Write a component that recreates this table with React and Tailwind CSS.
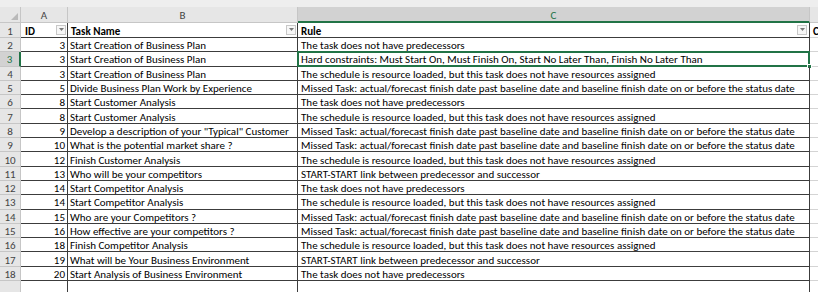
import React from "react";

const S = "The task does not have predecessors";
const H = "Hard constraints: Must Start On, Must Finish On, Start No Later Than, Finish No Later Than";
const R = "The schedule is resource loaded, but this task does not have resources assigned";
const M = "Missed Task: actual/forecast finish date past baseline date and baseline finish date on or before the status date";
const L = "START-START link between predecessor and successor";

const rows = [
  [3, "Start Creation of Business Plan", S],
  [3, "Start Creation of Business Plan", H],
  [3, "Start Creation of Business Plan", R],
  [5, "Divide Business Plan Work by Experience", M],
  [8, "Start Customer Analysis", S],
  [8, "Start Customer Analysis", R],
  [9, 'Develop a description of your "Typical" Customer', M],
  [10, "What is the potential market share ?", M],
  [12, "Finish Customer Analysis", R],
  [13, "Who will be your competitors", L],
  [14, "Start Competitor Analysis", S],
  [14, "Start Competitor Analysis", R],
  [15, "Who are your Competitors ?", M],
  [16, "How effective are your competitors ?", M],
  [18, "Finish Competitor Analysis", R],
  [19, "What will be Your Business Environment", L],
  [20, "Start Analysis of Business Environment", S],
];

function Drop() {
  return (
    <div className="w-[10px] h-[10px] border border-[#c8c8c8] bg-[#f7f7f7] flex items-center justify-center shrink-0 mt-[-1px]">
      <svg width="5" height="3" viewBox="0 0 5 3">
        <path d="M0 0 L5 0 L2.5 3 Z" fill="#7a7a7a" />
      </svg>
    </div>
  );
}

export default function App() {
  return (
    <div
      className="w-[825px] h-[292px] overflow-hidden bg-white text-[11px] text-black leading-none"
      style={{ fontFamily: "Carlito, Calibri, Lato, 'Liberation Sans', sans-serif" }}
    >
      <div className="w-[818px] h-[7px] bg-[#eeeeee]" />
      {/* column headers */}
      <div className="flex h-[16px] w-[818px]">
        <div className="w-[21px] shrink-0 bg-[#e6e6e6] border-r border-b border-[#c6c6c6] relative">
          <svg className="absolute right-[2px] bottom-[2px]" width="7" height="7" viewBox="0 0 7 7">
            <path d="M7 0 L7 7 L0 7 Z" fill="#b9b9b9" />
          </svg>
        </div>
        <div className="w-[47px] shrink-0 bg-[#e6e6e6] border-r border-b border-[#c6c6c6] flex items-center justify-center pt-[2px] text-[#444]">A</div>
        <div className="w-[230px] shrink-0 bg-[#e6e6e6] border-r border-b border-[#c6c6c6] flex items-center justify-center pt-[2px] text-[#444]">B</div>
        <div className="w-[512px] shrink-0 bg-[#d2d2d2] border-r border-[#c6c6c6] border-b-2 border-b-[#217346] flex items-center justify-center pt-[2px] text-[#217346]">C</div>
        <div className="flex-1 bg-[#e6e6e6] border-b border-[#c6c6c6]" />
      </div>
      {/* header row 1 */}
      <div className="flex h-[15px] w-[818px]">
        <div className="w-[21px] shrink-0 bg-[#e6e6e6] border-r border-b border-[#c6c6c6] flex items-center justify-center pt-[2px] text-[#444]">1</div>
        <div className="w-[47px] shrink-0 border-r border-b border-[#3c3c3c] flex items-center justify-between pl-[4px] pr-[1px] font-bold">
          <span className="pt-[2px]">ID</span>
          <Drop />
        </div>
        <div className="w-[230px] shrink-0 border-r border-b border-[#3c3c3c] flex items-center justify-between pl-[3px] pr-[1px] font-bold">
          <span className="pt-[2px]">Task Name</span>
          <Drop />
        </div>
        <div className="w-[512px] shrink-0 border-r border-b border-[#3c3c3c] flex items-center justify-between pl-[3px] pr-[2px] font-bold">
          <span className="pt-[2px]">Rule</span>
          <Drop />
        </div>
        <div className="flex-1 border-b border-[#d4d4d4] flex items-center pl-[3px] pt-[2px] font-bold overflow-hidden">C</div>
      </div>
      {rows.map((r, i) => {
        const n = i + 2;
        const sel = n === 3;
        return (
          <div key={i} className="flex h-[14.3px] w-[818px]">
            <div
              className={
                sel
                  ? "w-[21px] shrink-0 bg-[#d2d2d2] border-r-2 border-r-[#217346] border-b border-b-[#c6c6c6] flex items-center justify-center pt-[2px] text-[#217346]"
                  : "w-[21px] shrink-0 bg-[#e6e6e6] border-r border-b border-[#c6c6c6] flex items-center justify-center pt-[2px] text-[#444]"
              }
            >
              {n}
            </div>
            <div className="w-[47px] shrink-0 border-r border-b border-[#3c3c3c] flex items-center justify-end pr-[2px] pt-[2px]">{r[0]}</div>
            <div className="w-[230px] shrink-0 border-r border-b border-[#3c3c3c] flex items-center pl-[2px] pt-[2px] whitespace-nowrap overflow-hidden">{r[1]}</div>
            <div className="w-[512px] shrink-0 border-r border-b border-[#3c3c3c] flex items-center pl-[3px] pt-[2px] whitespace-nowrap relative">
              {r[2]}
              {sel && (
                <div className="absolute left-[-1px] right-[-1px] top-[-1px] bottom-[-1px] border-2 border-[#217346]">
                  <div className="absolute right-[-4px] bottom-[-4px] w-[5px] h-[5px] bg-[#217346] border border-white" />
                </div>
              )}
            </div>
            <div className="flex-1 border-b border-[#d4d4d4]" />
          </div>
        );
      })}
      <div className="flex h-[14.3px] w-[818px]">
        <div className="w-[21px] shrink-0 bg-[#e6e6e6] border-r border-[#c6c6c6]" />
        <div className="w-[47px] shrink-0 border-r border-[#3c3c3c]" />
        <div className="w-[230px] shrink-0 border-r border-[#3c3c3c]" />
        <div className="w-[512px] shrink-0 border-r border-[#3c3c3c]" />
        <div className="flex-1" />
      </div>
    </div>
  );
}
